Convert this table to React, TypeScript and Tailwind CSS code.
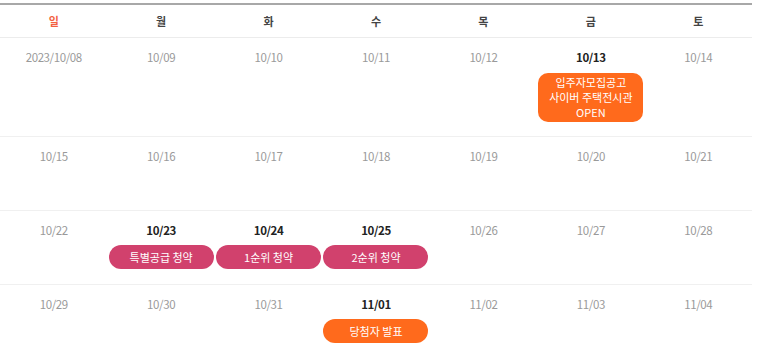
import React from 'react';

type Ev = { label: string[]; kind: 'box' | 'pink' | 'orange' };
type Day = { date: string; strong?: boolean; event?: Ev };

const days = ['일', '월', '화', '수', '목', '금', '토'];

const weeks: Day[][] = [
  [
    { date: '2023/10/08' },
    { date: '10/09' },
    { date: '10/10' },
    { date: '10/11' },
    { date: '10/12' },
    { date: '10/13', strong: true, event: { label: ['입주자모집공고', '사이버 주택전시관', 'OPEN'], kind: 'box' } },
    { date: '10/14' },
  ],
  [
    { date: '10/15' },
    { date: '10/16' },
    { date: '10/17' },
    { date: '10/18' },
    { date: '10/19' },
    { date: '10/20' },
    { date: '10/21' },
  ],
  [
    { date: '10/22' },
    { date: '10/23', strong: true, event: { label: ['특별공급 청약'], kind: 'pink' } },
    { date: '10/24', strong: true, event: { label: ['1순위 청약'], kind: 'pink' } },
    { date: '10/25', strong: true, event: { label: ['2순위 청약'], kind: 'pink' } },
    { date: '10/26' },
    { date: '10/27' },
    { date: '10/28' },
  ],
  [
    { date: '10/29' },
    { date: '10/30' },
    { date: '10/31' },
    { date: '11/01', strong: true, event: { label: ['당첨자 발표'], kind: 'orange' } },
    { date: '11/02' },
    { date: '11/03' },
    { date: '11/04' },
  ],
];

function EventTag({ ev }: { ev: Ev }) {
  if (ev.kind === 'box') {
    return (
      <div className="mx-auto mt-[7px] flex h-[49px] w-[105px] flex-col items-center justify-center rounded-[10px] bg-[#ff6a1c] text-[11px] leading-[15px] text-white">
        {ev.label.map((l) => (
          <span key={l}>{l}</span>
        ))}
      </div>
    );
  }
  return (
    <div
      className={
        ev.kind === 'pink'
          ? 'mx-auto mt-[6px] flex h-[24px] w-[105px] items-center justify-center rounded-full bg-[#d1416d] text-[11px] text-white'
          : 'mx-auto mt-[6px] flex h-[24px] w-[105px] items-center justify-center rounded-full bg-[#ff6a1c] text-[11px] text-white'
      }
    >
      {ev.label[0]}
    </div>
  );
}

export default function App() {
  return (
    <div className="h-[353px] w-[773px] overflow-hidden bg-white pt-[3px] font-['Noto_Sans_CJK_KR',sans-serif]">
      <div className="w-[752px] border-t-2 border-[#a8a8a8]">
        {/* Header */}
        <div className="grid h-[33px] grid-cols-7 border-b border-[#ececec] pt-px">
          {days.map((d, i) => (
            <div
              key={d}
              className={
                i === 0
                  ? 'flex items-center justify-center text-[11px] font-bold text-[#f3623f]'
                  : 'flex items-center justify-center text-[11px] font-bold text-[#444]'
              }
            >
              {d}
            </div>
          ))}
        </div>

        {weeks.map((week, wi) => (
          <div key={wi} className="grid min-h-[74px] grid-cols-7 border-b border-[#f0f0f0] pb-[14px]">
            {week.map((day) => (
              <div key={day.date} className="px-px pt-[10px]">
                <div
                  className={
                    day.strong
                      ? 'text-center text-[11.5px] leading-[18px] font-semibold tracking-[-0.4px] text-[#222]'
                      : 'text-center text-[11.5px] leading-[18px] tracking-[-0.4px] text-[#9a9a9a]'
                  }
                >
                  {day.date}
                </div>
                {day.event && <EventTag ev={day.event} />}
              </div>
            ))}
          </div>
        ))}
      </div>
    </div>
  );
}
